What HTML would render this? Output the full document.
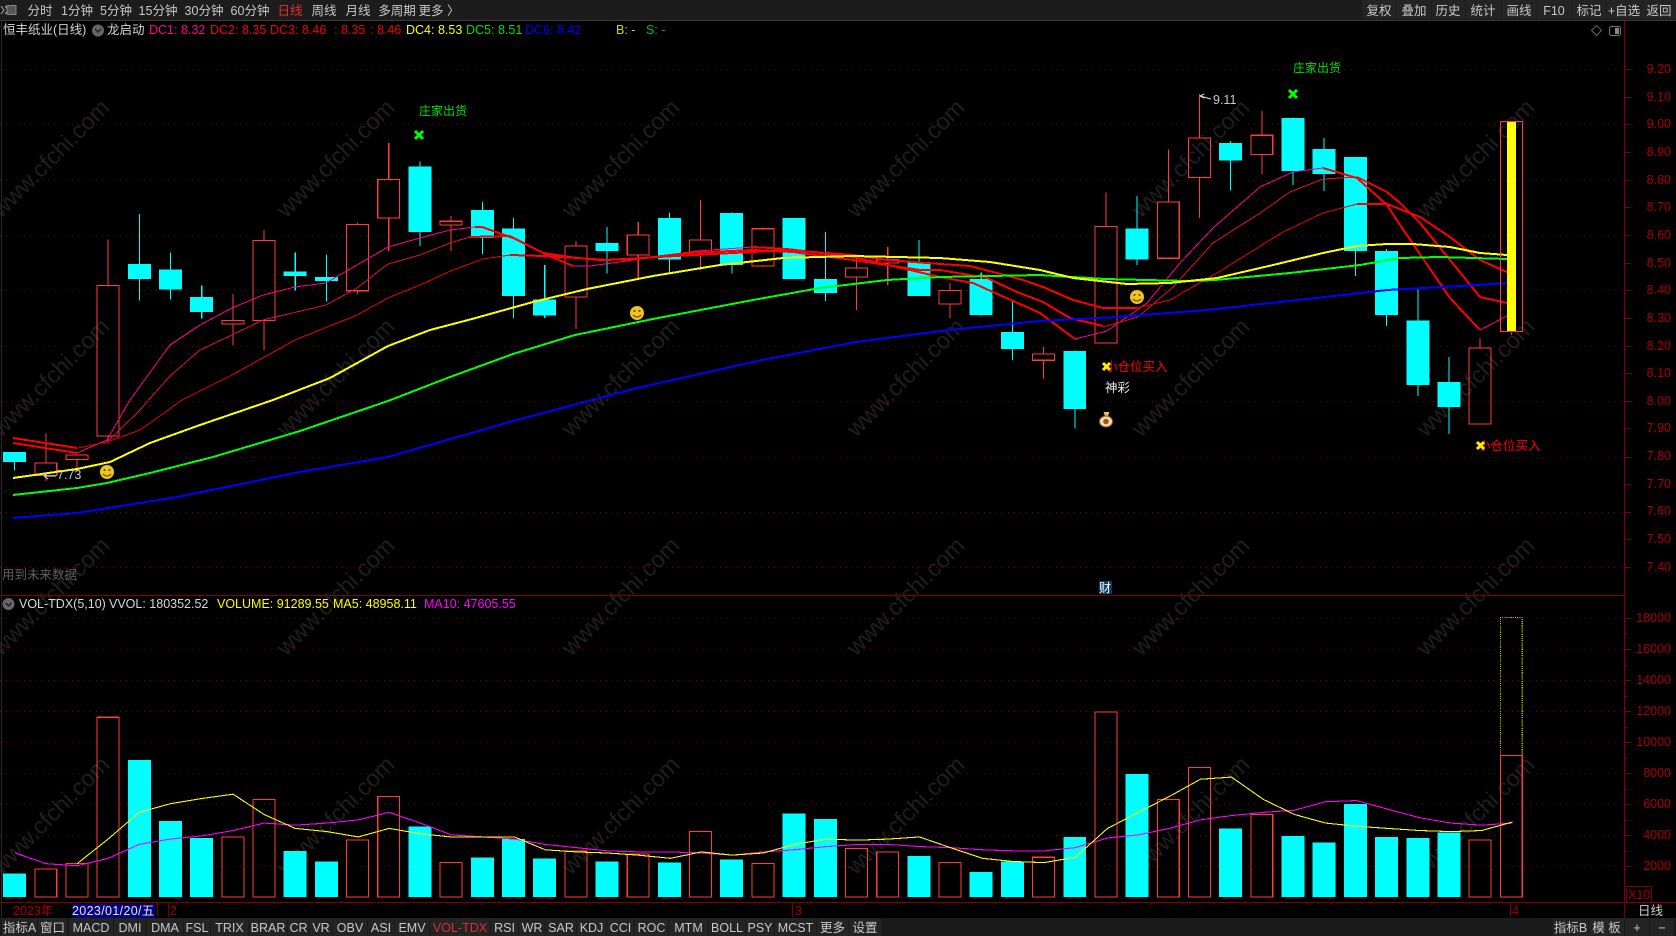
<!DOCTYPE html>
<html><head><meta charset="utf-8"><title>恒丰纸业</title>
<style>
html,body{margin:0;padding:0;background:#000;width:1676px;height:936px;overflow:hidden}
svg{display:block;position:absolute;left:0;top:0}
text{font-family:"Liberation Sans","Noto Sans CJK SC",sans-serif;font-size:12.5px}
.wm text{font-size:23.5px;fill:#1f1f1f;text-anchor:middle}
.c text{text-anchor:middle;fill:#c8c8c8}
.p text{fill:#a80000;text-anchor:end}
polyline{fill:none;shape-rendering:crispEdges}
</style></head><body>
<svg width="1676" height="936" viewBox="0 0 1676 936" xmlns="http://www.w3.org/2000/svg">
<rect width="1676" height="936" fill="#000"/>
<!-- watermark -->
<g class="wm" transform="translate(5,6)">
<text transform="translate(51,158) rotate(-45)">www.cfchi.com</text><text transform="translate(336,158) rotate(-45)">www.cfchi.com</text><text transform="translate(621,158) rotate(-45)">www.cfchi.com</text><text transform="translate(906,158) rotate(-45)">www.cfchi.com</text><text transform="translate(1191,158) rotate(-45)">www.cfchi.com</text><text transform="translate(1476,158) rotate(-45)">www.cfchi.com</text>
<text transform="translate(51,377) rotate(-45)">www.cfchi.com</text><text transform="translate(336,377) rotate(-45)">www.cfchi.com</text><text transform="translate(621,377) rotate(-45)">www.cfchi.com</text><text transform="translate(906,377) rotate(-45)">www.cfchi.com</text><text transform="translate(1191,377) rotate(-45)">www.cfchi.com</text><text transform="translate(1476,377) rotate(-45)">www.cfchi.com</text>
<text transform="translate(51,596) rotate(-45)">www.cfchi.com</text><text transform="translate(336,596) rotate(-45)">www.cfchi.com</text><text transform="translate(621,596) rotate(-45)">www.cfchi.com</text><text transform="translate(906,596) rotate(-45)">www.cfchi.com</text><text transform="translate(1191,596) rotate(-45)">www.cfchi.com</text><text transform="translate(1476,596) rotate(-45)">www.cfchi.com</text>
<text transform="translate(51,815) rotate(-45)">www.cfchi.com</text><text transform="translate(336,815) rotate(-45)">www.cfchi.com</text><text transform="translate(621,815) rotate(-45)">www.cfchi.com</text><text transform="translate(906,815) rotate(-45)">www.cfchi.com</text><text transform="translate(1191,815) rotate(-45)">www.cfchi.com</text><text transform="translate(1476,815) rotate(-45)">www.cfchi.com</text>
</g>
<!-- dotted grid -->
<path d="M0 69.5H1624M0 124.5H1624M0 180.5H1624M0 235.5H1624M0 290.5H1624M0 346.5H1624M0 401.5H1624M0 457.5H1624M0 512.5H1624M0 567.5H1624M0 618.5H1624M0 649.5H1624M0 680.5H1624M0 711.5H1624M0 742.5H1624M0 773.5H1624M0 804.5H1624M0 835.5H1624M0 866.5H1624" stroke="#7a0000" stroke-width="1" stroke-dasharray="1 5" fill="none"/>
<!-- candles (scaled group) -->
<g transform="translate(1.2,0) scale(1.0689)" shape-rendering="crispEdges">
<path fill="none" stroke="#00ffff" stroke-width="1" d="M12.6 432V440M129.3 200V281M158.5 236V280M187.6 267V298M275.1 236V272M304.3 238V282M391.8 151V230M450.2 189V237.6M479.3 204V297.6M508.5 248V297.6M566.8 212.4V256M625.2 199V255M683.5 199V256M741.9 204V261M771 217V281.6M858.5 224.5V277M916.9 255V295M946 281.6V337M1004.4 328V401M1062.7 183.5V248M1150.2 132V178M1208.6 110V173M1237.7 129V178.7M1266.9 147V258M1296.1 233V305M1325.3 270V370.5M1354.4 334V406"/>
<g fill="#00ffff">
<rect x="1.8" y="423" width="21.5" height="9"/><rect x="118.5" y="247" width="21.5" height="14"/><rect x="147.7" y="252" width="21.5" height="19"/><rect x="176.8" y="278" width="21.5" height="14"/><rect x="264.3" y="254" width="21.5" height="4"/><rect x="293.5" y="259" width="21.5" height="4"/><rect x="381" y="156" width="21.5" height="61"/><rect x="439.4" y="196.5" width="21.5" height="26"/><rect x="468.5" y="214" width="21.5" height="63"/><rect x="497.7" y="280" width="21.5" height="15"/><rect x="556" y="227.3" width="21.5" height="7.5"/><rect x="614.4" y="204" width="21.5" height="39"/><rect x="672.7" y="199.3" width="21.5" height="48.6"/><rect x="731.1" y="204" width="21.5" height="57"/><rect x="760.2" y="261" width="21.5" height="13"/><rect x="847.7" y="245" width="21.5" height="32"/><rect x="906.1" y="261" width="21.5" height="33.7"/><rect x="935.2" y="310.6" width="21.5" height="15.9"/><rect x="993.6" y="328.4" width="21.5" height="54.2"/><rect x="1051.9" y="214" width="21.5" height="29"/><rect x="1139.4" y="134" width="21.5" height="16"/><rect x="1197.8" y="110.5" width="21.5" height="49.5"/><rect x="1226.9" y="139.5" width="21.5" height="23.5"/><rect x="1256.1" y="147" width="21.5" height="88"/><rect x="1285.3" y="235" width="21.5" height="59.7"/><rect x="1314.5" y="300" width="21.5" height="60"/><rect x="1343.6" y="357.4" width="21.5" height="23.4"/>
</g>
<path fill="none" stroke="#ff3c3c" stroke-width="1" d="M41.8 405V433M41.8 445V450M70.9 430V441M100.1 224V267M100.1 408V415M216.8 275V300M216.8 303V323M246 215V225M246 300V328M333.5 208V210M333.5 272V275M362.6 134V168M362.6 204V235M421 202V207M421 210.5V235M537.7 225.5V230M537.7 277.8V308M596 207.7V219.9M596 238.6V262M654.3 187V224.6M654.3 235.7V252.6M712.7 213V214M712.7 248.8V250M800.2 242V250.7M800.2 259V290M829.4 231V243M829.4 246V266.6M887.7 264.7V271.6M887.7 284.4V297.5M975.2 324.6V331M975.2 337V354.6M1033.6 180V212M1091.9 140V189M1121.1 88V129M1121.1 166V204M1179.4 104V126.5M1179.4 144.5V163M1383.6 316V325.7M1412.8 311V313.4"/>
<g fill="none" stroke="#ff3c3c" stroke-width="1">
<rect x="31.5" y="433" width="20.5" height="12"/><rect x="60.6" y="425.5" width="20.5" height="4.5"/><rect x="89.8" y="267" width="20.5" height="141"/><rect x="206.5" y="300" width="20.5" height="3"/><rect x="235.7" y="225" width="20.5" height="75"/><rect x="323.2" y="210" width="20.5" height="62"/><rect x="352.3" y="168" width="20.5" height="36"/><rect x="410.7" y="207" width="20.5" height="3.5"/><rect x="527.4" y="230" width="20.5" height="47.8"/><rect x="585.7" y="219.9" width="20.5" height="18.7"/><rect x="644" y="224.6" width="20.5" height="11.1"/><rect x="702.4" y="214" width="20.5" height="34.8"/><rect x="789.9" y="250.7" width="20.5" height="8.3"/><rect x="819.1" y="243" width="20.5" height="3"/><rect x="877.4" y="271.6" width="20.5" height="12.8"/><rect x="964.9" y="331" width="20.5" height="6"/><rect x="1023.3" y="212" width="20.5" height="109"/><rect x="1081.6" y="189" width="20.5" height="52.6"/><rect x="1110.8" y="129" width="20.5" height="37"/><rect x="1169.1" y="126.5" width="20.5" height="18"/><rect x="1373.3" y="325.7" width="20.5" height="71"/>
</g>
</g>
<!-- price MA lines in real px -->
<polyline stroke="#ff0090" stroke-width="1" points="77,453 107,440 130,400 170,345 200,325 232,308 263,295 295,287 326,283 357,265 388,247 420,238 450,230 475,227"/>
<polyline stroke="#e01030" stroke-width="1" points="78,448 107,442 138,412 170,376 200,350 232,335 263,320 326,305 357,288 388,264 420,255 450,243 470,237"/>
<polyline stroke="#e80000" stroke-width="1" points="78,448 107,442 140,430 182,400 232,375 295,340 357,315 388,298 420,285 453,270 483,259 510,255"/>
<polyline stroke="#ff0090" stroke-width="1" points="573,266 590,266 620,262 653,257 697,251 753,247"/>
<polyline stroke="#ff0090" stroke-width="1" points="1075,339 1107,331 1147,303 1180,263 1213,228 1260,187 1293,172 1323,168"/>
<polyline stroke="#e01030" stroke-width="1" points="1103,327 1138,317 1173,287 1213,243 1260,213 1290,192 1323,179 1357,177"/>
<polyline stroke="#e80000" stroke-width="1" points="1137,308 1170,300 1217,273 1283,232 1323,213 1357,204"/>
<polyline stroke="#ff0090" stroke-width="1" points="1480,330 1507,316"/>
<polyline stroke="#ff0000" stroke-width="2" points="13,438 77,448"/>
<polyline stroke="#ff0000" stroke-width="2" points="13,443 77,453"/>
<polyline stroke="#ff0000" stroke-width="2" points="475,227 482,227 513,238 547,255 573,266"/>
<polyline stroke="#ff0000" stroke-width="2" points="470,237 510,236 543,253 577,258 600,260 637,259 687,253 753,250 793,252 853,260 920,270 940,270 987,278 1017,292 1043,302 1070,318 1103,326"/>
<polyline stroke="#ff0000" stroke-width="2" points="510,255 543,256 577,258 607,260 693,255 753,252 787,250 853,255 887,260 940,264 970,266 993,272 1023,280 1043,287 1073,300 1103,308 1137,308"/>
<polyline stroke="#ff0000" stroke-width="2" points="753,247 787,249 853,257 897,267 940,277 973,283 993,292 1040,313 1075,339"/>
<polyline stroke="#ff0000" stroke-width="2" points="1323,168 1357,178 1387,205 1400,225 1450,298 1480,330"/>
<polyline stroke="#ff0000" stroke-width="2" points="1357,177 1387,192 1400,203 1420,223 1480,297 1507,303"/>
<polyline stroke="#ff0000" stroke-width="2" points="1357,204 1387,204 1420,217 1450,237 1480,260 1507,272"/>
<polyline stroke="#0000ff" stroke-width="2" points="13,518 77,513 177,497 300,472 388,457 513,421 637,388 762,360 856,342 949,330 1040,321 1117,317 1207,310 1307,299 1387,290 1460,286 1507,283"/>
<polyline stroke="#00ff00" stroke-width="2" points="13,495 77,488 107,483 150,473 213,457 300,431 388,401 450,377 513,354 575,335 653,319 753,300 820,288 887,280 940,277 1040,275 1105,279 1187,281 1215,280 1290,273 1360,265 1400,258 1440,257 1507,259"/>
<polyline stroke="#ffff00" stroke-width="2" points="13,478 77,469 110,462 150,443 200,425 273,400 330,378 388,346 430,330 472,319 533,302 587,289 653,276 720,265 783,258 853,256 940,258 990,262 1040,270 1073,278 1127,284 1170,283 1217,278 1273,265 1323,253 1357,246 1387,244 1413,244 1450,247 1480,253 1507,255"/>
<!-- last candle -->
<rect x="1507" y="121" width="9" height="211" fill="#ffff00" shape-rendering="crispEdges"/>
<rect x="1500.5" y="121.5" width="22" height="210" fill="none" stroke="#ff3c3c" shape-rendering="crispEdges"/>
<!-- volume -->
<g transform="translate(1.2,0) scale(1.0689)" shape-rendering="crispEdges">
<g fill="#00ffff">
<rect x="1.8" y="817" width="21.5" height="22"/><rect x="118.5" y="711" width="21.5" height="128"/><rect x="147.7" y="768" width="21.5" height="71"/><rect x="176.8" y="784" width="21.5" height="55"/><rect x="264.3" y="796" width="21.5" height="43"/><rect x="293.5" y="806" width="21.5" height="33"/><rect x="381" y="773" width="21.5" height="66"/><rect x="439.4" y="802" width="21.5" height="37"/><rect x="468.5" y="785" width="21.5" height="54"/><rect x="497.7" y="803" width="21.5" height="36"/><rect x="556" y="806" width="21.5" height="33"/><rect x="614.4" y="807" width="21.5" height="32"/><rect x="672.7" y="804" width="21.5" height="35"/><rect x="731.1" y="761" width="21.5" height="78"/><rect x="760.2" y="766" width="21.5" height="73"/><rect x="847.7" y="801" width="21.5" height="38"/><rect x="906.1" y="816" width="21.5" height="23"/><rect x="935.2" y="806" width="21.5" height="33"/><rect x="993.6" y="783" width="21.5" height="56"/><rect x="1051.9" y="724" width="21.5" height="115"/><rect x="1139.4" y="775" width="21.5" height="64"/><rect x="1197.8" y="782" width="21.5" height="57"/><rect x="1226.9" y="788" width="21.5" height="51"/><rect x="1256.1" y="752" width="21.5" height="87"/><rect x="1285.3" y="783" width="21.5" height="56"/><rect x="1314.5" y="784" width="21.5" height="55"/><rect x="1343.6" y="779" width="21.5" height="60"/>
</g>
<g fill="none" stroke="#ff3c3c" stroke-width="1">
<rect x="31.5" y="813" width="20.5" height="26"/><rect x="60.6" y="808" width="20.5" height="31"/><rect x="89.8" y="671" width="20.5" height="168"/><rect x="206.5" y="783" width="20.5" height="56"/><rect x="235.7" y="748" width="20.5" height="91"/><rect x="323.2" y="786" width="20.5" height="53"/><rect x="352.3" y="745" width="20.5" height="94"/><rect x="410.7" y="807" width="20.5" height="32"/><rect x="527.4" y="796" width="20.5" height="43"/><rect x="585.7" y="799" width="20.5" height="40"/><rect x="644" y="778" width="20.5" height="61"/><rect x="702.4" y="808" width="20.5" height="31"/><rect x="789.9" y="794" width="20.5" height="45"/><rect x="819.1" y="797" width="20.5" height="42"/><rect x="877.4" y="807" width="20.5" height="32"/><rect x="964.9" y="802" width="20.5" height="37"/><rect x="1023.3" y="666" width="20.5" height="173"/><rect x="1081.6" y="748" width="20.5" height="91"/><rect x="1110.8" y="718" width="20.5" height="121"/><rect x="1169.1" y="762" width="20.5" height="77"/><rect x="1373.3" y="786" width="20.5" height="53"/><rect x="1402.5" y="706.6" width="20.5" height="132.4"/>
</g>
<path d="M1402.5 706V577.7H1423V706" fill="none" stroke="#c8c800" stroke-width="1" stroke-dasharray="1 1"/>
<polyline stroke="#ff00ff" stroke-width="1" points="13,798 42,808 71,810 100,803 129,790 158,785 188,782 217,777 246,770 275,772 305,770 334,767 363,760 392,770 421,781 451,783 480,785 509,790 538,793 567,796 596,797 626,797 655,798 684,800 713,797 742,795 772,792 801,790 830,790 859,792 888,793 918,795 947,796 976,796 1005,793 1035,784 1064,781 1093,775 1122,767 1151,763 1181,760 1210,758 1239,750 1268,749 1297,757 1327,765 1356,770 1385,772 1414,770"/>
<polyline stroke="#ffff00" stroke-width="1" points="71,808 100,785 129,760 158,752 188,747 217,743 246,762 275,775 305,778 334,783 363,775 392,780 421,783 451,783 480,783 509,795 538,797 567,798 596,800 626,803 655,797 684,800 713,798 742,790 772,785 801,786 830,785 859,783 888,793 918,803 947,806 976,807 1005,802 1035,775 1064,760 1093,745 1122,729 1151,727 1181,748 1210,762 1239,770 1268,773 1297,775 1327,777 1356,778 1385,777 1414,769"/>
</g>
<!-- text labels beneath the X marks -->
<g fill="#00e000"><text x="419" y="115" style="font-size:12px">庄家出货</text><text x="1293" y="72" style="font-size:12px">庄家出货</text></g>
<g fill="#ff0000"><text x="1105" y="371">小仓位买入</text><text x="1478" y="450">小仓位买入</text></g>
<!-- markers -->
<path d="M415 131L423 139M423 131L415 139M1289 90L1297 98M1297 90L1289 98" stroke="#00ff00" stroke-width="3" fill="none"/>
<path d="M1103 363L1110 370M1110 363L1103 370M1477 442L1484 449M1484 442L1477 449" stroke="#ffee00" stroke-width="3" fill="none"/>
<g>
<circle cx="107" cy="472" r="7" fill="#eec41e"/><circle cx="104.500" cy="470" r="1" fill="#5a4000"/><circle cx="109.500" cy="470" r="1" fill="#5a4000"/><path d="M103 474Q107 478 111 474" stroke="#5a4000" fill="none"/>
<circle cx="637" cy="313" r="7" fill="#eec41e"/><circle cx="634.500" cy="311" r="1" fill="#5a4000"/><circle cx="639.500" cy="311" r="1" fill="#5a4000"/><path d="M633 315Q637 319 641 315" stroke="#5a4000" fill="none"/>
<circle cx="1137" cy="297" r="7" fill="#eec41e"/><circle cx="1134.500" cy="295" r="1" fill="#5a4000"/><circle cx="1139.500" cy="295" r="1" fill="#5a4000"/><path d="M1133 299Q1137 303 1141 299" stroke="#5a4000" fill="none"/>
<path d="M1103.500 412H1109.500L1108 416H1105Z" fill="#e8c060"/>
<ellipse cx="1106" cy="421.500" rx="6.500" ry="5.500" fill="#f3dfa0" stroke="#8a6020" stroke-width="1"/>
<circle cx="1106" cy="421.500" r="2.800" fill="#a05030"/>
</g>
<text x="1105" y="392" fill="#e8e8e8">神彩</text>
<path d="M1200 96L1211 99M1200 96L1204 94M1200 96L1204 98" stroke="#ddd" fill="none"/>
<text x="1213" y="104" fill="#ccc">9.11</text>
<path d="M44 476H56M44 476L48 473M44 476L48 479" stroke="#ddd" fill="none"/>
<text x="57" y="479" fill="#bcd">7.73</text>
<text x="2" y="579" fill="#606060">用到未来数据</text>
<rect x="1099" y="581" width="13" height="13" fill="#0a3a6a"/>
<text x="1099" y="592" fill="#fff" style="font-size:12px">财</text>
<!-- frame -->
<path d="M1624.500 20V918M0 595.500H1624M0 902.500H1676" stroke="#800000" stroke-width="1" fill="none" shape-rendering="crispEdges"/>
<path d="M1625 69.500h6M1625 97.500h6M1625 124.500h6M1625 152.500h6M1625 180.500h6M1625 207.500h6M1625 235.500h6M1625 263.500h6M1625 290.500h6M1625 318.500h6M1625 346.500h6M1625 373.500h6M1625 401.500h6M1625 428.500h6M1625 457.500h6M1625 484.500h6M1625 512.500h6M1625 539.500h6M1625 567.500h6M1625 618.500h6M1625 633.500h3M1625 649.500h6M1625 665.500h3M1625 680.500h6M1625 696.500h3M1625 711.500h6M1625 727.500h3M1625 742.500h6M1625 758.500h3M1625 773.500h6M1625 789.500h3M1625 804.500h6M1625 820.500h3M1625 835.500h6M1625 851.500h3M1625 866.500h6" stroke="#800000" fill="none" shape-rendering="crispEdges"/>
<path d="M1.500 20V918" stroke="#2a2a2a" fill="none"/>
<path d="M157.500 903V917M168.500 903V917M792.500 903V917M1510.500 903V917M324.500 903V905M480.500 903V905M636.500 903V905M972.500 903V905M1151.500 903V905M1331.500 903V905" stroke="#800000" fill="none" shape-rendering="crispEdges"/>
<g class="p">
<text x="1671" y="73">9.20</text><text x="1671" y="101">9.10</text><text x="1671" y="128">9.00</text><text x="1671" y="156">8.90</text><text x="1671" y="184">8.80</text><text x="1671" y="211">8.70</text><text x="1671" y="239">8.60</text><text x="1671" y="267">8.50</text><text x="1671" y="294">8.40</text><text x="1671" y="322">8.30</text><text x="1671" y="350">8.20</text><text x="1671" y="377">8.10</text><text x="1671" y="405">8.00</text><text x="1671" y="432">7.90</text><text x="1671" y="460">7.80</text><text x="1671" y="488">7.70</text><text x="1671" y="515">7.60</text><text x="1671" y="543">7.50</text><text x="1671" y="571">7.40</text>
<text x="1671" y="622">18000</text><text x="1671" y="653">16000</text><text x="1671" y="684">14000</text><text x="1671" y="715">12000</text><text x="1671" y="746">10000</text><text x="1671" y="777">8000</text><text x="1671" y="808">6000</text><text x="1671" y="839">4000</text><text x="1671" y="870">2000</text>
</g>
<rect x="1626.500" y="886.500" width="25" height="16" fill="none" stroke="#800000" shape-rendering="crispEdges"/>
<text x="1628" y="899" fill="#a80000">X10</text>
<text x="13" y="915" fill="#a80000">2023年</text>
<rect x="72" y="904" width="83" height="14" fill="#000080"/>
<text x="72" y="915" fill="#e8e8e8" style="letter-spacing:.35px">2023/01/20/五</text>
<text x="170" y="915" fill="#a80000">2</text><text x="795" y="915" fill="#a80000">3</text><text x="1512" y="915" fill="#a80000">4</text>
<text x="1638" y="915" fill="#d0d0d0">日线</text>
<!-- top bar -->
<rect width="1676" height="20" fill="#1c1c1c"/>
<rect y="20" width="1676" height="1" fill="#3a3a3a"/>
<g fill="#242424"><rect x="1362" width="34" height="19"/><rect x="1397" width="34" height="19"/><rect x="1432" width="33" height="19"/><rect x="1466" width="35" height="19"/><rect x="1502" width="34" height="19"/><rect x="1537" width="34" height="19"/><rect x="1572" width="34" height="19"/><rect x="1607" width="34" height="19"/><rect x="1642" width="34" height="19"/></g>
<path d="M1 6l3 4-3 4M5 6l3 4-3 4" stroke="#aaa" fill="none"/><rect x="7" y="5.500" width="9" height="9" fill="#555" stroke="#888"/>
<g class="c">
<text x="40" y="15">分时</text><text x="77" y="15">1分钟</text><text x="116" y="15">5分钟</text><text x="158" y="15">15分钟</text><text x="204" y="15">30分钟</text><text x="250" y="15">60分钟</text><text x="290" y="15" style="fill:#e83030">日线</text><text x="324" y="15">周线</text><text x="358" y="15">月线</text><text x="397" y="15">多周期</text><text x="439" y="15">更多 〉</text>
<text x="1379" y="15">复权</text><text x="1414" y="15">叠加</text><text x="1448" y="15">历史</text><text x="1483" y="15">统计</text><text x="1519" y="15">画线</text><text x="1554" y="15">F10</text><text x="1589" y="15">标记</text><text x="1624" y="15">+自选</text><text x="1659" y="15">返回</text>
</g>
<!-- header -->
<text x="3" y="34" fill="#d8d8d8">恒丰纸业(日线)</text>
<circle cx="98" cy="30.500" r="6" fill="#666"/><path d="M95 29l3 3 3-3" stroke="#222" stroke-width="1.500" fill="none"/>
<text x="107" y="34" fill="#d8d8d8">龙启动</text>
<text x="149" y="34" fill="#ff0090">DC1: 8.32</text>
<text x="210" y="34" fill="#f00020">DC2: 8.35</text>
<text x="270" y="34" fill="#f00000">DC3: 8.46</text>
<text x="334" y="34" fill="#f00000">: 8.35</text>
<text x="370" y="34" fill="#f00000">: 8.46</text>
<text x="406" y="34" fill="#ffff00">DC4: 8.53</text>
<text x="466" y="34" fill="#00e000">DC5: 8.51</text>
<text x="525" y="34" fill="#0000ff">DC6: 8.42</text>
<text x="616" y="34" fill="#d8d800">B: -</text>
<text x="646" y="34" fill="#00c000">S: -</text>
<path d="M1596.500 25.500l5 5-5 5-5-5z" stroke="#666" fill="none"/>
<rect x="1609.500" y="26.500" width="11" height="9" rx="2" fill="none" stroke="#777"/><rect x="1615" y="28" width="4" height="6" fill="#888"/>
<!-- vol header -->
<circle cx="8.500" cy="604" r="6" fill="#666"/><path d="M5.500 603l3 3 3-3" stroke="#222" stroke-width="1.500" fill="none"/>
<text x="19" y="608" fill="#d8d8d8">VOL-TDX(5,10)</text>
<text x="109" y="608" fill="#d8d8d8">VVOL: 180352.52</text>
<text x="217" y="608" fill="#ffff00">VOLUME: 91289.55</text>
<text x="333" y="608" fill="#ffff00">MA5: 48958.11</text>
<text x="424" y="608" fill="#ff00ff">MA10: 47605.55</text>
<!-- bottom tabs -->
<rect y="918" width="1676" height="18" fill="#1a1a1a"/>
<g fill="#242424"><rect x="2" y="918" width="35" height="18"/><rect x="38" y="918" width="29" height="18"/><rect x="69" y="918" width="44" height="18"/><rect x="114" y="918" width="32" height="18"/><rect x="147" y="918" width="36" height="18"/><rect x="184" y="918" width="26" height="18"/><rect x="211" y="918" width="37" height="18"/><rect x="249" y="918" width="38" height="18"/><rect x="288" y="918" width="21" height="18"/><rect x="310" y="918" width="22" height="18"/><rect x="333" y="918" width="34" height="18"/><rect x="368" y="918" width="26" height="18"/><rect x="395" y="918" width="34" height="18"/><rect x="430" y="918" width="60" height="18"/><rect x="491" y="918" width="27" height="18"/><rect x="519" y="918" width="26" height="18"/><rect x="546" y="918" width="30" height="18"/><rect x="577" y="918" width="29" height="18"/><rect x="607" y="918" width="27" height="18"/><rect x="635" y="918" width="33" height="18"/><rect x="669" y="918" width="39" height="18"/><rect x="709" y="918" width="36" height="18"/><rect x="746" y="918" width="28" height="18"/><rect x="775" y="918" width="41" height="18"/><rect x="817" y="918" width="31" height="18"/><rect x="849" y="918" width="32" height="18"/><rect x="1553" y="918" width="35" height="18"/><rect x="1589" y="918" width="35" height="18"/><rect x="1625" y="918" width="24" height="18"/><rect x="1650" y="918" width="24" height="18"/></g>
<g class="c">
<text x="19.500" y="932">指标A</text><text x="52.500" y="932">窗口</text><text x="91" y="932">MACD</text><text x="130" y="932">DMI</text><text x="165" y="932">DMA</text><text x="197" y="932">FSL</text><text x="229.500" y="932">TRIX</text><text x="268" y="932">BRAR</text><text x="298.500" y="932">CR</text><text x="321" y="932">VR</text><text x="350" y="932">OBV</text><text x="381" y="932">ASI</text><text x="412" y="932">EMV</text><text x="460" y="932" style="fill:#d83030">VOL-TDX</text><text x="504.500" y="932">RSI</text><text x="532" y="932">WR</text><text x="561" y="932">SAR</text><text x="591.500" y="932">KDJ</text><text x="620.500" y="932">CCI</text><text x="651.500" y="932">ROC</text><text x="688.500" y="932">MTM</text><text x="727" y="932">BOLL</text><text x="760" y="932">PSY</text><text x="795.500" y="932">MCST</text><text x="832.500" y="932">更多</text><text x="865" y="932">设置</text>
<text x="1570.500" y="932">指标B</text><text x="1606.500" y="932">模 板</text><text x="1637" y="932">+</text><text x="1662" y="932">−</text>
</g>
</svg>
</body></html>
